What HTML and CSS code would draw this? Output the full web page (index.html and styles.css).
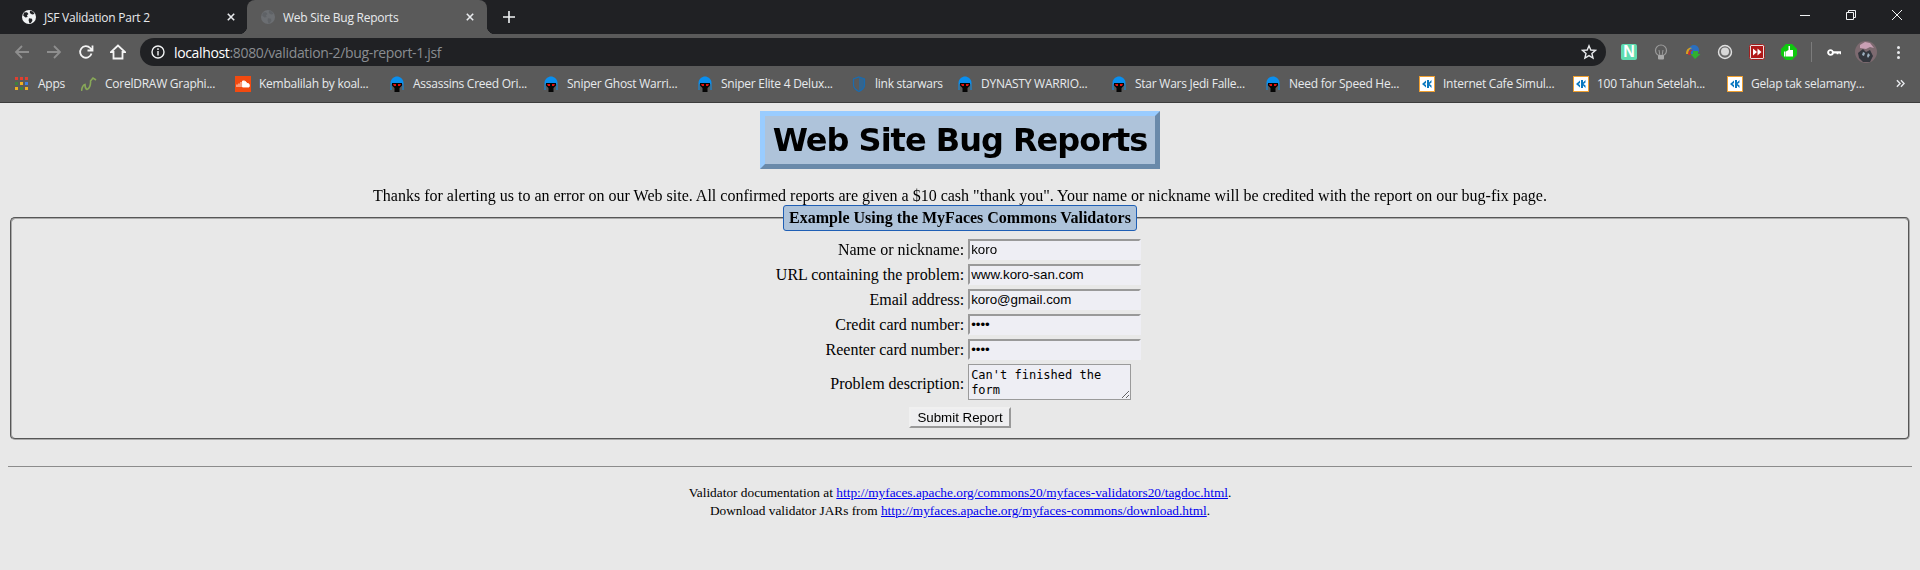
FILE: index.html
```html
<!DOCTYPE html>
<html>
  <head>
    <title>Web Site Bug Reports</title>
    <link rel="stylesheet" href="styles.css">
  </head>
  <body>
    <svg class="defs" width="0" height="0">
      <symbol id="globe" viewBox="0 0 16 16">
        <circle cx="8" cy="8" r="7" fill="currentColor"/>
        <path d="M3 3.500 6 3.200 7.500 5 6 6.200 6.600 8 4.400 8.400 2.200 6.500ZM9 1.800l3 .6 1.500 2.600-2.400.6-2.300-1.600ZM8 9.200l3 .6.4 2-1.600 2.200-1.400.2-.8-3Z" style="fill: var(--globe-land, #202124)"/>
      </symbol>
      <symbol id="helmet" viewBox="0 0 16 16">
        <path d="M1.500 7C1.500 3 5 .5 8 .5s6.500 2.500 6.500 6.500v7h-1V8h-11v6h-1Z" fill="#0a8fef"/>
        <path d="M3 7h10v2.500L10.500 12V16h-5v-4L3 9.500Z" fill="#050505"/>
        <path d="M4 8h3v2H5ZM9 8h3l-1 2H9Z" fill="#e01010"/>
      </symbol>
      <symbol id="kicon" viewBox="0 0 16 16">
        <rect x=".5" y=".5" width="15" height="15" fill="#fff" stroke="#f0a030"/>
        <path d="M3 8 7 4.500V7L5.500 8 7 9V11.500Z" fill="#0a78c0"/>
        <path d="M8 4h2v2.500L12.500 4V6.500L10.500 8 12.500 9.500V12L10 9.500V12H8Z" fill="#0a78c0"/>
      </symbol>
    </svg>

    <div class="tabstrip">
      <div class="tab">
        <svg class="tab-icon"><use href="#globe"/></svg>
        <span class="tab-title">JSF Validation Part 2</span>
        <svg class="tab-close" viewBox="0 0 10 10"><path d="M1 1 9 9M9 1 1 9"/></svg>
      </div>
      <div class="tab tab-active">
        <svg class="tab-icon tab-icon-dim"><use href="#globe"/></svg>
        <span class="tab-title">Web Site Bug Reports</span>
        <svg class="tab-close" viewBox="0 0 10 10"><path d="M1 1 9 9M9 1 1 9"/></svg>
      </div>
      <svg class="new-tab" viewBox="0 0 12 12"><path d="M6 0V12M0 6H12"/></svg>
      <div class="window-btns">
        <div class="window-btn"><svg viewBox="0 0 10 10"><path d="M0 5.500H10"/></svg></div>
        <div class="window-btn"><svg viewBox="0 0 10 10"><path d="M.5 2.500H7.500V9.500H.5ZM2.500 2.500V.5H9.500V7.500H7.500"/></svg></div>
        <div class="window-btn"><svg viewBox="0 0 10 10"><path d="M0 0 10 10M10 0 0 10"/></svg></div>
      </div>
    </div>

    <div class="toolbar">
      <div class="tool-btn"><svg class="nav-icon nav-off" viewBox="0 0 16 16"><path d="M15 8H2M8 2 2 8l6 6"/></svg></div>
      <div class="tool-btn"><svg class="nav-icon nav-off" viewBox="0 0 16 16"><path d="M1 8H14M8 2l6 6-6 6"/></svg></div>
      <div class="tool-btn"><svg class="nav-icon" viewBox="0 0 16 16"><path d="M13.500 9.500A5.800 5.800 0 1 1 12.200 4L14 6M14.500 1.500V6.500H9.500"/></svg></div>
      <div class="tool-btn"><svg class="nav-icon" viewBox="0 0 16 16"><path d="M8 1.500 1 8h2.500v6.500h9V8H15Z"/></svg></div>
      <div class="omnibox">
        <svg class="info-icon" viewBox="0 0 14 14"><circle cx="7" cy="7" r="6"/><path d="M7 6V10.500M7 3.300V5"/></svg>
        <span class="url"><b>localhost</b>:8080/validation-2/bug-report-1.jsf</span>
        <svg class="star-icon" viewBox="0 0 16 16"><path d="M8 1.800 9.800 6l4.700.4-3.600 3 1.100 4.600L8 11.600 3.900 14 5 9.400l-3.500-3L6.200 6Z"/></svg>
      </div>
      <div class="ext-btn ext-first"><span class="ext-n">N</span></div>
      <div class="ext-btn">
        <svg class="ext-icon" viewBox="0 0 16 16"><circle cx="8" cy="6.500" r="5.500" fill="none" stroke="#9a9a9a" stroke-width="1.200"/><path d="M6 6l1 6M10 6 9 12" stroke="#9a9a9a" fill="none"/><rect x="5" y="11" width="6" height="4.500" rx="1" fill="#a8a8a8"/></svg>
      </div>
      <div class="ext-btn">
        <svg class="ext-icon" viewBox="0 0 16 16"><circle cx="9" cy="6" r="5" fill="#2a6fc0"/><path d="M1 10C1 5 4 3 7 4 4 5 3 7 4 10Z" fill="#d8a020"/><path d="M3 11C3 7 5 5 8 6 6 7 5 8 6 11Z" fill="#c03030"/><path d="M8 7h5v3h2.500L10 15 5.500 10 8 10Z" fill="#30b030"/></svg>
      </div>
      <div class="ext-btn">
        <svg class="ext-icon" viewBox="0 0 16 16"><circle cx="8" cy="8" r="6.500" fill="#6a6a6a" stroke="#e0e0e0" stroke-width="1.400"/><circle cx="8" cy="7.500" r="4" fill="#d8d8d8"/></svg>
      </div>
      <div class="ext-btn">
        <svg class="ext-icon" viewBox="0 0 16 16"><rect x=".5" y=".5" width="15" height="15" rx="2" fill="#e8e0e0" stroke="#a02020"/><rect x="2" y="2" width="12" height="12" fill="#b01818"/><path d="M4 4.500 8 8l-4 3.500ZM8.500 4.500 12.500 8l-4 3.500Z" fill="#fff"/></svg>
      </div>
      <div class="ext-btn">
        <svg class="ext-icon" viewBox="0 0 16 16"><path d="M5 0h6l5 5v6l-5 5H5l-5-5V5Z" fill="#0ec80e"/><path d="M7.500 2h1.500v4h3v6.500H5V7.500L7.500 6ZM3 7.500h1.500v5H3Z" fill="#fff"/></svg>
      </div>
      <div class="tool-sep"></div>
      <div class="tool-btn">
        <svg class="key-icon" viewBox="0 0 16 10"><circle cx="4" cy="5" r="2.700" fill="none" stroke="#fff" stroke-width="2.200"/><path d="M6.500 3.500H16V7H14.500V6H13V7H11V6H6.500Z" fill="#fff"/></svg>
      </div>
      <div class="tool-btn">
        <svg class="avatar" viewBox="0 0 22 22">
          <circle cx="11" cy="11" r="11" fill="#7d6a70"/>
          <path d="M5 4l5-3 5 1 4 5-4-1-4 2-6-1Z" fill="#c9a0b4"/>
          <path d="M3 12l5-4 3 3 4-2 3 6-3 6H8l-4-4Z" fill="#33363d"/>
          <path d="M8 11l2 1-1 3-2-1ZM13 12l2 2-2 3-1-2Z" fill="#9db0c0"/>
        </svg>
      </div>
      <div class="tool-btn"><div class="dots"><i></i><i></i><i></i></div></div>
    </div>

    <div class="bookmarks">
      <div class="bm bm-apps">
        <svg class="bm-icon" viewBox="0 0 13 13">
          <path d="M0 0h3v3H0Z" fill="#e04030"/><path d="M5 0h3v3H5Z" fill="#e04030"/><path d="M10 0h3v3h-3Z" fill="#e04030"/>
          <path d="M0 5h3v3H0Z" fill="#3c8040"/><path d="M5 5h3v3H5Z" fill="#f0b020"/><path d="M10 5h3v3h-3Z" fill="#4080e0"/>
          <path d="M0 10h3v3H0Z" fill="#f0b020"/><path d="M5 10h3v3H5Z" fill="#3c8040"/><path d="M10 10h3v3h-3Z" fill="#f0b020"/>
        </svg>
        Apps
      </div>
      <div class="bm">
        <svg class="bm-icon" viewBox="0 0 16 16"><path d="M.5 15C1 11 2 9 4 8.500 4 11 5 13 6 13.500 8 13 10 9 9.500 5L12 2l3 2" fill="none" stroke="#88a858" stroke-width="1.600"/></svg>
        CorelDRAW Graphi...
      </div>
      <div class="bm">
        <svg class="bm-icon" viewBox="0 0 16 16"><rect width="16" height="16" fill="#f24a10"/><path d="M2 11V8.500M4 11V7.500M6 11V6M7.500 11V5C10 4.500 11.500 6 12 7.500 14 7 15 9 14 11Z" stroke="#fff" stroke-width=".9" fill="#fff"/></svg>
        Kembalilah by koal...
      </div>
      <div class="bm"><svg class="bm-icon"><use href="#helmet"/></svg>Assassins Creed Ori...</div>
      <div class="bm"><svg class="bm-icon"><use href="#helmet"/></svg>Sniper Ghost Warri...</div>
      <div class="bm"><svg class="bm-icon"><use href="#helmet"/></svg>Sniper Elite 4 Delux...</div>
      <div class="bm bm-short">
        <svg class="bm-icon" viewBox="0 0 16 16"><path d="M8 1 13.500 3V9C13.500 12 11 14 8 15.500 5 14 2.500 12 2.500 9V3Z" fill="none" stroke="#1a6cb0" stroke-width="1.200"/><path d="M8 1 13.500 3V9C13.500 12 11 14 8 15.500Z" fill="#1a6cb0" opacity=".6"/></svg>
        link starwars
      </div>
      <div class="bm"><svg class="bm-icon"><use href="#helmet"/></svg>DYNASTY WARRIO...</div>
      <div class="bm"><svg class="bm-icon"><use href="#helmet"/></svg>Star Wars Jedi Falle...</div>
      <div class="bm"><svg class="bm-icon"><use href="#helmet"/></svg>Need for Speed He...</div>
      <div class="bm"><svg class="bm-icon"><use href="#kicon"/></svg>Internet Cafe Simul...</div>
      <div class="bm"><svg class="bm-icon"><use href="#kicon"/></svg>100 Tahun Setelah...</div>
      <div class="bm"><svg class="bm-icon"><use href="#kicon"/></svg>Gelap tak selamany...</div>
      <svg class="bm-more" viewBox="0 0 10 10"><path d="M1 1.500 4.500 5 1 8.500M5.500 1.500 9 5 5.500 8.500"/></svg>
    </div>

    <div class="page">
      <div class="title-wrap">
        <h1 class="title">Web Site Bug Reports</h1>
      </div>
      <p class="intro">Thanks for alerting us to an error on our Web site. All confirmed reports are given a $10 cash "thank you". Your name or nickname will be credited with the report on our bug-fix page.</p>
      <fieldset class="box">
        <legend class="box-legend">Example Using the MyFaces Commons Validators</legend>
        <form class="bug-form">
          <table class="form-table">
            <tr>
              <td class="label">Name or nickname:</td>
              <td class="input-cell"><input class="field" type="text" value="koro"></td>
            </tr>
            <tr>
              <td class="label">URL containing the problem:</td>
              <td class="input-cell"><input class="field" type="text" value="www.koro-san.com"></td>
            </tr>
            <tr>
              <td class="label">Email address:</td>
              <td class="input-cell"><input class="field" type="text" value="koro@gmail.com"></td>
            </tr>
            <tr>
              <td class="label">Credit card number:</td>
              <td class="input-cell"><input class="field" type="password" value="1234"></td>
            </tr>
            <tr>
              <td class="label">Reenter card number:</td>
              <td class="input-cell"><input class="field" type="password" value="1234"></td>
            </tr>
            <tr>
              <td class="label label-area">Problem description:</td>
              <td class="input-cell"><textarea class="area">Can't finished the form</textarea></td>
            </tr>
          </table>
          <input class="submit" type="submit" value="Submit Report">
        </form>
      </fieldset>
      <hr class="rule">
      <div class="notes">
        Validator documentation at <a href="#">http://myfaces.apache.org/commons20/myfaces-validators20/tagdoc.html</a>.<br>
        Download validator JARs from <a href="#">http://myfaces.apache.org/myfaces-commons/download.html</a>.
      </div>
    </div>
  </body>
</html>
```

FILE: styles.css
```css
html, body {
  margin: 0;
  padding: 0;
}
body {
  height: 570px;
  overflow: hidden;
  background: #e8e8e8;
  font-family: "Liberation Serif", serif;
}
.defs {
  display: block;
  height: 0;
}

/* browser chrome */
.tabstrip {
  display: flex;
  align-items: center;
  height: 34px;
  padding-left: 8px;
  background: #202124;
  font-family: "Open Sans", sans-serif;
  font-size: 12px;
  color: #e8eaed;
}
.tab {
  position: relative;
  display: flex;
  align-items: center;
  box-sizing: border-box;
  width: 239px;
  height: 34px;
  padding-left: 13px;
}
.tab-active {
  width: 240px;
  background: #5a5a5a;
  border-radius: 8px 8px 0 0;
}
.tab-active::before,
.tab-active::after {
  content: "";
  position: absolute;
  bottom: 0;
  width: 8px;
  height: 8px;
}
.tab-active::before {
  left: -8px;
  background: radial-gradient(circle at 0 0, #202124 8px, #5a5a5a 8.5px);
}
.tab-active::after {
  right: -8px;
  background: radial-gradient(circle at 100% 0, #202124 8px, #5a5a5a 8.5px);
}
.tab-icon {
  width: 16px;
  height: 16px;
  color: #f1f3f4;
}
.tab-icon-dim {
  --globe-land: #5f6266;
  color: #6b6e72;
}
.tab-title {
  margin-left: 7px;
  letter-spacing: -0.25px;
}
.tab-close {
  position: absolute;
  left: 219px;
  width: 8px;
  height: 8px;
  fill: none;
  stroke: #e8eaed;
  stroke-width: 2;
}
.new-tab {
  width: 12px;
  height: 12px;
  margin-left: 16px;
  fill: none;
  stroke: #f1f3f4;
  stroke-width: 1.6;
}
.window-btns {
  display: flex;
  margin-left: auto;
  align-self: flex-start;
}
.window-btn {
  display: flex;
  align-items: center;
  justify-content: center;
  width: 46px;
  height: 29px;
}
.window-btn svg {
  width: 10px;
  height: 10px;
  fill: none;
  stroke: #f1f3f4;
  stroke-width: 1;
}

.toolbar {
  display: flex;
  align-items: flex-end;
  box-sizing: border-box;
  height: 32px;
  padding-left: 6px;
  background: #5a5a5a;
}
.tool-btn,
.ext-btn {
  display: flex;
  align-items: center;
  justify-content: center;
  flex: none;
  width: 32px;
  height: 28px;
}
.nav-icon {
  width: 16px;
  height: 16px;
  fill: none;
  stroke: #f4f4f4;
  stroke-width: 1.8;
}
.nav-off {
  stroke: #8e8e8e;
}
.omnibox {
  display: flex;
  align-items: center;
  flex: none;
  box-sizing: border-box;
  width: 1466px;
  height: 28px;
  margin-left: 6px;
  padding: 0 9px 0 11px;
  border-radius: 14px;
  background: #202124;
  font-family: "Open Sans", sans-serif;
  font-size: 14px;
  color: #8a8d91;
}
.info-icon {
  width: 14px;
  height: 14px;
  fill: none;
  stroke: #f1f3f4;
  stroke-width: 1.4;
}
.url {
  margin-left: 9px;
  letter-spacing: -0.35px;
}
.url b {
  font-weight: 400;
  color: #fff;
}
.star-icon {
  width: 16px;
  height: 16px;
  margin-left: auto;
  fill: none;
  stroke: #e8eaed;
  stroke-width: 1.4;
}
.ext-first {
  margin-left: 7px;
}
.ext-n {
  display: flex;
  align-items: center;
  justify-content: center;
  width: 16px;
  height: 16px;
  border-radius: 2px;
  background: #5fdcb0;
  font-family: "Liberation Sans", sans-serif;
  font-size: 16px;
  font-weight: 700;
  color: #fff;
}
.ext-icon {
  width: 16px;
  height: 16px;
}
.tool-sep {
  flex: none;
  width: 1px;
  height: 20px;
  margin: 0 6px 4px;
  background: #7c7c7c;
}
.key-icon {
  width: 14px;
  height: 9px;
}
.avatar {
  width: 22px;
  height: 22px;
}
.dots i {
  display: block;
  width: 3px;
  height: 3px;
  margin: 2px 0;
  border-radius: 50%;
  background: #e8eaed;
}

.bookmarks {
  display: flex;
  align-items: center;
  box-sizing: border-box;
  height: 37px;
  padding: 0 0 1px 15px;
  background: #5a5a5a;
  border-bottom: 1px solid #3c3c3c;
  font-family: "Open Sans", sans-serif;
  font-size: 12px;
  color: #e8eaed;
}
.bm {
  display: flex;
  align-items: center;
  flex: none;
  width: 154px;
  letter-spacing: -0.25px;
  white-space: nowrap;
}
.bm-apps {
  width: 66px;
}
.bm-short {
  width: 106px;
}
.bm-icon {
  flex: none;
  width: 16px;
  height: 16px;
  margin-right: 8px;
}
.bm-apps .bm-icon {
  width: 13px;
  height: 13px;
  margin-right: 10px;
}
.bm-more {
  width: 9px;
  height: 9px;
  margin-left: 15px;
  fill: none;
  stroke: #e8eaed;
  stroke-width: 1.6;
}

/* page content */
.page {
  box-sizing: border-box;
  height: 467px;
  padding: 8px;
  font-size: 16px;
  color: #000;
}
.title-wrap {
  text-align: center;
}
.title {
  display: inline-block;
  margin: 0;
  padding: 5px 8px;
  border: 5px solid;
  border-color: #99ccff #6a8aaa #6a8aaa #99ccff;
  background: #aec3da;
  font-family: "DejaVu Sans", sans-serif;
  font-size: 32px;
  font-weight: 700;
  letter-spacing: -1px;
}
.intro {
  margin: 18px 0 0;
  text-align: center;
}
.box {
  margin: 0 2px;
  padding: 5px 12px 10px;
  border: 2px groove #aaa;
  border-radius: 5px;
}
.box-legend {
  margin: 0 auto;
  padding: 3px 5px;
  border: 1px solid #1f5fb5;
  border-radius: 3px;
  background: #aec3da;
  font-weight: 700;
}
.bug-form {
  text-align: center;
}
.form-table {
  margin: 0 auto;
  border-spacing: 2px;
}
.form-table td {
  padding: 1px;
}
.form-table .input-cell {
  padding-right: 4px;
}
.label {
  text-align: right;
}
.form-table .label-area {
  padding-top: 4px;
}
.field {
  display: block;
  box-sizing: border-box;
  width: 173px;
  height: 21px;
  margin: 0;
  padding: 0 1px;
  border: 2px solid;
  border-color: #999 #eeeef4 #eeeef4 #999;
  background: #eeeef4;
  font-family: "Liberation Sans", sans-serif;
  font-size: 13.33px;
}
.area {
  display: block;
  box-sizing: border-box;
  width: 163px;
  height: 36px;
  margin: 0;
  padding: 3px 2px 2px;
  border: 1px solid #9a9a9a;
  background: #eeeef4;
  font-family: "DejaVu Sans Mono", monospace;
  font-size: 12px;
  line-height: 15px;
}
.submit {
  display: block;
  box-sizing: border-box;
  width: 102px;
  height: 21px;
  margin: 4px auto 0;
  padding: 0;
  border: 2px solid;
  border-color: #f0f0f0 #999 #999 #f0f0f0;
  background: #eeeef0;
  font-family: "Liberation Sans", sans-serif;
  font-size: 13.33px;
}
.rule {
  margin: 26px 0 0;
  border: 0;
  border-top: 1px solid #8c8c8c;
}
.notes {
  margin-top: 17px;
  text-align: center;
  font-size: 13.33px;
  line-height: 18px;
}
```
